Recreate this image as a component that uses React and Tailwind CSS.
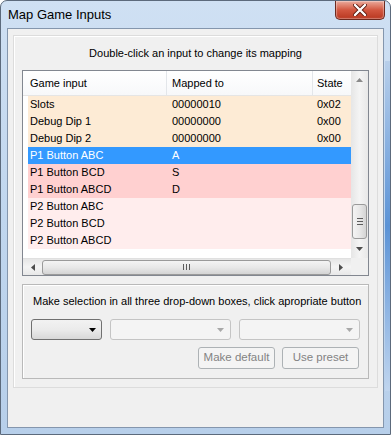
import React from "react";

const rows = [
  { name: "Slots", map: "00000010", state: "0x02", bg: "bg-[#fdebd5]" },
  { name: "Debug Dip 1", map: "00000000", state: "0x00", bg: "bg-[#fdebd5]" },
  { name: "Debug Dip 2", map: "00000000", state: "0x00", bg: "bg-[#fdebd5]" },
  { name: "P1 Button ABC", map: "A", state: "", bg: "bg-[#3399ff]", sel: true },
  { name: "P1 Button BCD", map: "S", state: "", bg: "bg-[#ffd0d0]" },
  { name: "P1 Button ABCD", map: "D", state: "", bg: "bg-[#ffd0d0]" },
  { name: "P2 Button ABC", map: "", state: "", bg: "bg-[#ffeded]" },
  { name: "P2 Button BCD", map: "", state: "", bg: "bg-[#ffeded]" },
  { name: "P2 Button ABCD", map: "", state: "", bg: "bg-[#ffeded]" },
];

function Tri({ dir = "down", color = "#4d4d4d", size = 7 }) {
  const pts = {
    up: "0,5 7,5 3.5,1",
    down: "0,1 7,1 3.5,5",
    left: "5,0 5,7 1,3.5",
    right: "1,0 1,7 5,3.5",
  }[dir];
  const w = dir === "up" || dir === "down" ? size : 6;
  const h = dir === "up" || dir === "down" ? 6 : size;
  return (
    <svg width={w} height={h} viewBox={`0 0 ${w} ${h}`}>
      <polygon points={pts} fill={color} />
    </svg>
  );
}

export default function App() {
  return (
    <div
      className="relative w-[391px] h-[435px] overflow-hidden rounded-t-[7px] border border-[#5c6a7c] bg-gradient-to-b from-[#cfe0f3] via-[#c0d6ee] to-[#b7cfea] flex flex-col"
      style={{ fontFamily: '"Liberation Sans", Arial, sans-serif' }}
    >
      {/* glass streak on the right edge */}
      <div className="absolute right-0 top-[60px] w-[5px] h-[330px] bg-gradient-to-b from-[#b8cfea] via-[#5b93d6] to-[#c0d5ee]" />
      {/* title bar */}
      <div className="h-[27px] flex items-start justify-between pl-[7px] pr-[5px]">
        <div className="mt-[6px] text-[13px] leading-[16px] text-black">Map Game Inputs</div>
        <div className="w-[50px] h-[19px] rounded-b-[5px] border border-t-0 border-[#6d2a1f] bg-gradient-to-b from-[#e9a99b] via-[#d2563f] to-[#b8361f] flex items-center justify-center shadow-[inset_0_0_1px_1px_rgba(255,255,255,0.35)]">
          <svg width="14" height="12" viewBox="0 0 14 12">
            <path d="M2 1 L12 11 M12 1 L2 11" stroke="#5a1a10" strokeWidth="4" strokeLinecap="round" />
            <path d="M2 1 L12 11 M12 1 L2 11" stroke="#ffffff" strokeWidth="2.4" strokeLinecap="round" />
          </svg>
        </div>
      </div>

      {/* client area */}
      <div className="mx-[6px] h-[400px] border border-[#8496ad] bg-[#f0f0f0] px-[5px] pt-[6px]">
        {/* outer panel */}
        <div className="h-[353px] border border-[#dcdcdc] shadow-[inset_1px_1px_0_#ffffff] px-[8px] flex flex-col">
          <div className="pt-[9px] h-[34px] text-center text-[11px] leading-[16px] text-black">
            Double-click an input to change its mapping
          </div>

          {/* list view */}
          <div className="h-[206px] border border-[#828790] bg-white flex text-[11px] leading-[17px] text-black">
            <div className="w-[329px] flex flex-col">
              {/* header */}
              <div className="h-[25px] flex items-center bg-gradient-to-b from-white to-[#f7f8fa] border-b border-[#e5e5e5]">
                <div className="w-[144px] pl-[7px] border-r border-[#e3e6ea] h-full flex items-center">Game input</div>
                <div className="w-[146px] pl-[5px] border-r border-[#e3e6ea] h-full flex items-center">Mapped to</div>
                <div className="flex-1 pl-[4px] h-full flex items-center">State</div>
              </div>
              <div className="flex-1 pl-[5px] flex flex-col">
                {rows.map((r) => (
                  <div key={r.name} className={`h-[17px] flex ${r.bg} ${r.sel ? "text-white" : "text-black"}`}>
                    <div className="w-[139px] pl-[2px] whitespace-nowrap">{r.name}</div>
                    <div className="w-[146px] pl-[5px]">{r.map}</div>
                    <div className="flex-1 pl-[4px]">{r.state}</div>
                  </div>
                ))}
              </div>
              {/* horizontal scrollbar */}
              <div className="h-[17px] flex items-center bg-gradient-to-b from-[#e6e6e6] via-[#f4f4f4] to-[#e8e8e8] border-t border-[#e0e0e0]">
                <div className="w-[19px] flex items-center justify-center">
                  <Tri dir="left" />
                </div>
                <div className="w-[289px] h-[15px] rounded-[3px] border border-[#9a9a9a] bg-gradient-to-b from-[#f4f4f4] via-[#e8e8e8] to-[#d4d4d4] flex items-center justify-center gap-[2px]">
                  <div className="w-[1px] h-[6px] bg-[#5c5c5c]" />
                  <div className="w-[1px] h-[6px] bg-[#5c5c5c]" />
                  <div className="w-[1px] h-[6px] bg-[#5c5c5c]" />
                </div>
                <div className="flex-1 flex items-center justify-center">
                  <Tri dir="right" />
                </div>
              </div>
            </div>
            {/* vertical scrollbar */}
            <div className="w-[17px] flex flex-col">
              <div className="flex-1 flex flex-col bg-gradient-to-r from-[#e6e6e6] via-[#f4f4f4] to-[#e8e8e8]">
                <div className="h-[17px] flex items-center justify-center">
                  <Tri dir="up" color="#8a8a8a" />
                </div>
                <div className="h-[116px]" />
                <div className="h-[35px] mx-[1px] rounded-[3px] border border-[#9a9a9a] bg-gradient-to-r from-[#f4f4f4] via-[#e8e8e8] to-[#d4d4d4] flex flex-col items-center justify-center gap-[2px]">
                  <div className="w-[6px] h-[1px] bg-[#5c5c5c]" />
                  <div className="w-[6px] h-[1px] bg-[#5c5c5c]" />
                  <div className="w-[6px] h-[1px] bg-[#5c5c5c]" />
                </div>
                <div className="flex-1 flex items-center justify-center">
                  <Tri dir="down" />
                </div>
              </div>
              <div className="h-[17px] bg-[#f0f0f0]" />
            </div>
          </div>

          {/* lower group */}
          <div className="mt-[8px] h-[95px] border border-[#b9b9b9] shadow-[inset_1px_1px_0_#ffffff] px-[8px] flex flex-col">
            <div className="pt-[8px] pl-[2px] text-[11px] leading-[16px] text-black whitespace-nowrap">
              Make selection in all three drop-down boxes, click apropriate button
            </div>
            <div className="mt-[10px] flex gap-[8px]">
              <div className="w-[72px] h-[21px] rounded-[3px] border border-[#707070] bg-gradient-to-b from-[#f2f2f2] via-[#ebebeb] to-[#d8d8d8] flex items-center justify-end pr-[5px]">
                <Tri dir="down" color="#000000" />
              </div>
              <div className="w-[122px] h-[21px] rounded-[3px] border border-[#c4c4c4] bg-[#f4f4f4] flex items-center justify-end pr-[6px]">
                <Tri dir="down" color="#a8a8a8" />
              </div>
              <div className="w-[122px] h-[21px] rounded-[3px] border border-[#c4c4c4] bg-[#f4f4f4] flex items-center justify-end pr-[6px]">
                <Tri dir="down" color="#a8a8a8" />
              </div>
            </div>
            <div className="mt-[7px] flex justify-end gap-[7px] pr-[1px]">
              <div className="w-[77px] h-[22px] rounded-[3px] border border-[#adb2b5] bg-[#f4f4f4] flex items-center justify-center text-[11.5px] text-[#838383]">
                Make default
              </div>
              <div className="w-[77px] h-[22px] rounded-[3px] border border-[#adb2b5] bg-[#f4f4f4] flex items-center justify-center text-[11.5px] text-[#838383]">
                Use preset
              </div>
            </div>
          </div>
        </div>
      </div>
    </div>
  );
}
